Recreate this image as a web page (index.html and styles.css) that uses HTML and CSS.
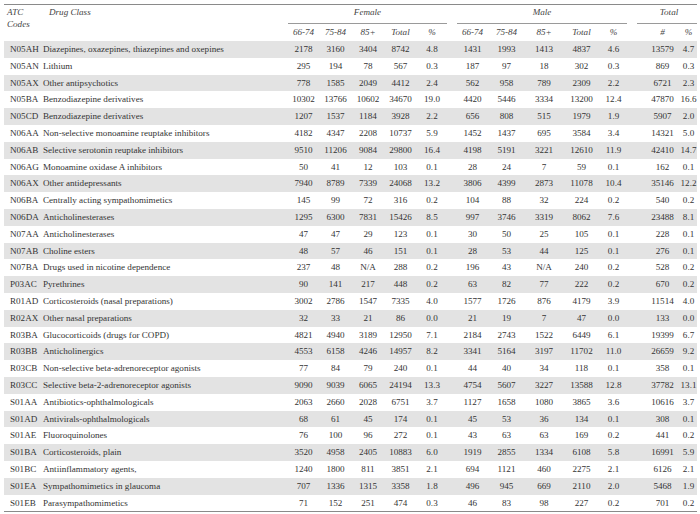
FILE: index.html
```html
<!DOCTYPE html>
<html lang="en">
<head>
<meta charset="utf-8">
<title>ATC drug classes by sex and age</title>
<link rel="stylesheet" href="styles.css">
</head>
<body>
<div class="wrap">
<table class="atc">
<colgroup>
<col class="c-atc"><col class="c-drug">
<col class="c-f66"><col class="c-f75"><col class="c-f85"><col class="c-ft"><col class="c-fp">
<col class="c-sp">
<col class="c-m66"><col class="c-m75"><col class="c-m85"><col class="c-mt"><col class="c-mp">
<col class="c-sp">
<col class="c-tn"><col class="c-tp">
</colgroup>
<thead>
<tr class="h1">
<th rowspan="2" class="hc-atc">ATC<br>Codes</th>
<th rowspan="2" class="hc-drug">Drug Class</th>
<th colspan="5" class="grp"><div class="grp-l">Female</div></th>
<th class="sp"></th>
<th colspan="5" class="grp"><div class="grp-l">Male</div></th>
<th class="sp"></th>
<th colspan="2" class="grp"><div class="grp-l grp-total">Total</div></th>
</tr>
<tr class="h2">
<th>66-74</th><th>75-84</th><th>85+</th><th>Total</th><th>%</th>
<th class="sp"></th>
<th>66-74</th><th>75-84</th><th>85+</th><th>Total</th><th>%</th>
<th class="sp"></th>
<th class="tn">#</th><th>%</th>
</tr>
</thead>
<tbody>
<tr><td class="code">N05AH</td><td class="drug">Diazepines, oxazepines, thiazepines and oxepines</td><td>2178</td><td>3160</td><td>3404</td><td>8742</td><td>4.8</td><td class="sp"></td><td>1431</td><td>1993</td><td>1413</td><td>4837</td><td>4.6</td><td class="sp"></td><td class="tn">13579</td><td>4.7</td></tr>
<tr><td class="code">N05AN</td><td class="drug">Lithium</td><td>295</td><td>194</td><td>78</td><td>567</td><td>0.3</td><td class="sp"></td><td>187</td><td>97</td><td>18</td><td>302</td><td>0.3</td><td class="sp"></td><td class="tn">869</td><td>0.3</td></tr>
<tr><td class="code">N05AX</td><td class="drug">Other antipsychotics</td><td>778</td><td>1585</td><td>2049</td><td>4412</td><td>2.4</td><td class="sp"></td><td>562</td><td>958</td><td>789</td><td>2309</td><td>2.2</td><td class="sp"></td><td class="tn">6721</td><td>2.3</td></tr>
<tr><td class="code">N05BA</td><td class="drug">Benzodiazepine derivatives</td><td>10302</td><td>13766</td><td>10602</td><td>34670</td><td>19.0</td><td class="sp"></td><td>4420</td><td>5446</td><td>3334</td><td>13200</td><td>12.4</td><td class="sp"></td><td class="tn">47870</td><td>16.6</td></tr>
<tr><td class="code">N05CD</td><td class="drug">Benzodiazepine derivatives</td><td>1207</td><td>1537</td><td>1184</td><td>3928</td><td>2.2</td><td class="sp"></td><td>656</td><td>808</td><td>515</td><td>1979</td><td>1.9</td><td class="sp"></td><td class="tn">5907</td><td>2.0</td></tr>
<tr><td class="code">N06AA</td><td class="drug">Non-selective monoamine reuptake inhibitors</td><td>4182</td><td>4347</td><td>2208</td><td>10737</td><td>5.9</td><td class="sp"></td><td>1452</td><td>1437</td><td>695</td><td>3584</td><td>3.4</td><td class="sp"></td><td class="tn">14321</td><td>5.0</td></tr>
<tr><td class="code">N06AB</td><td class="drug">Selective serotonin reuptake inhibitors</td><td>9510</td><td>11206</td><td>9084</td><td>29800</td><td>16.4</td><td class="sp"></td><td>4198</td><td>5191</td><td>3221</td><td>12610</td><td>11.9</td><td class="sp"></td><td class="tn">42410</td><td>14.7</td></tr>
<tr><td class="code">N06AG</td><td class="drug">Monoamine oxidase A inhibitors</td><td>50</td><td>41</td><td>12</td><td>103</td><td>0.1</td><td class="sp"></td><td>28</td><td>24</td><td>7</td><td>59</td><td>0.1</td><td class="sp"></td><td class="tn">162</td><td>0.1</td></tr>
<tr><td class="code">N06AX</td><td class="drug">Other antidepressants</td><td>7940</td><td>8789</td><td>7339</td><td>24068</td><td>13.2</td><td class="sp"></td><td>3806</td><td>4399</td><td>2873</td><td>11078</td><td>10.4</td><td class="sp"></td><td class="tn">35146</td><td>12.2</td></tr>
<tr><td class="code">N06BA</td><td class="drug">Centrally acting sympathomimetics</td><td>145</td><td>99</td><td>72</td><td>316</td><td>0.2</td><td class="sp"></td><td>104</td><td>88</td><td>32</td><td>224</td><td>0.2</td><td class="sp"></td><td class="tn">540</td><td>0.2</td></tr>
<tr><td class="code">N06DA</td><td class="drug">Anticholinesterases</td><td>1295</td><td>6300</td><td>7831</td><td>15426</td><td>8.5</td><td class="sp"></td><td>997</td><td>3746</td><td>3319</td><td>8062</td><td>7.6</td><td class="sp"></td><td class="tn">23488</td><td>8.1</td></tr>
<tr><td class="code">N07AA</td><td class="drug">Anticholinesterases</td><td>47</td><td>47</td><td>29</td><td>123</td><td>0.1</td><td class="sp"></td><td>30</td><td>50</td><td>25</td><td>105</td><td>0.1</td><td class="sp"></td><td class="tn">228</td><td>0.1</td></tr>
<tr><td class="code">N07AB</td><td class="drug">Choline esters</td><td>48</td><td>57</td><td>46</td><td>151</td><td>0.1</td><td class="sp"></td><td>28</td><td>53</td><td>44</td><td>125</td><td>0.1</td><td class="sp"></td><td class="tn">276</td><td>0.1</td></tr>
<tr><td class="code">N07BA</td><td class="drug">Drugs used in nicotine dependence</td><td>237</td><td>48</td><td>N/A</td><td>288</td><td>0.2</td><td class="sp"></td><td>196</td><td>43</td><td>N/A</td><td>240</td><td>0.2</td><td class="sp"></td><td class="tn">528</td><td>0.2</td></tr>
<tr><td class="code">P03AC</td><td class="drug">Pyrethrines</td><td>90</td><td>141</td><td>217</td><td>448</td><td>0.2</td><td class="sp"></td><td>63</td><td>82</td><td>77</td><td>222</td><td>0.2</td><td class="sp"></td><td class="tn">670</td><td>0.2</td></tr>
<tr><td class="code">R01AD</td><td class="drug">Corticosteroids (nasal preparations)</td><td>3002</td><td>2786</td><td>1547</td><td>7335</td><td>4.0</td><td class="sp"></td><td>1577</td><td>1726</td><td>876</td><td>4179</td><td>3.9</td><td class="sp"></td><td class="tn">11514</td><td>4.0</td></tr>
<tr><td class="code">R02AX</td><td class="drug">Other nasal preparations</td><td>32</td><td>33</td><td>21</td><td>86</td><td>0.0</td><td class="sp"></td><td>21</td><td>19</td><td>7</td><td>47</td><td>0.0</td><td class="sp"></td><td class="tn">133</td><td>0.0</td></tr>
<tr><td class="code">R03BA</td><td class="drug">Glucocorticoids (drugs for COPD)</td><td>4821</td><td>4940</td><td>3189</td><td>12950</td><td>7.1</td><td class="sp"></td><td>2184</td><td>2743</td><td>1522</td><td>6449</td><td>6.1</td><td class="sp"></td><td class="tn">19399</td><td>6.7</td></tr>
<tr><td class="code">R03BB</td><td class="drug">Anticholinergics</td><td>4553</td><td>6158</td><td>4246</td><td>14957</td><td>8.2</td><td class="sp"></td><td>3341</td><td>5164</td><td>3197</td><td>11702</td><td>11.0</td><td class="sp"></td><td class="tn">26659</td><td>9.2</td></tr>
<tr><td class="code">R03CB</td><td class="drug">Non-selective beta-adrenoreceptor agonists</td><td>77</td><td>84</td><td>79</td><td>240</td><td>0.1</td><td class="sp"></td><td>44</td><td>40</td><td>34</td><td>118</td><td>0.1</td><td class="sp"></td><td class="tn">358</td><td>0.1</td></tr>
<tr><td class="code">R03CC</td><td class="drug">Selective beta-2-adrenoreceptor agonists</td><td>9090</td><td>9039</td><td>6065</td><td>24194</td><td>13.3</td><td class="sp"></td><td>4754</td><td>5607</td><td>3227</td><td>13588</td><td>12.8</td><td class="sp"></td><td class="tn">37782</td><td>13.1</td></tr>
<tr><td class="code">S01AA</td><td class="drug">Antibiotics-ophthalmologicals</td><td>2063</td><td>2660</td><td>2028</td><td>6751</td><td>3.7</td><td class="sp"></td><td>1127</td><td>1658</td><td>1080</td><td>3865</td><td>3.6</td><td class="sp"></td><td class="tn">10616</td><td>3.7</td></tr>
<tr><td class="code">S01AD</td><td class="drug">Antivirals-ophthalmologicals</td><td>68</td><td>61</td><td>45</td><td>174</td><td>0.1</td><td class="sp"></td><td>45</td><td>53</td><td>36</td><td>134</td><td>0.1</td><td class="sp"></td><td class="tn">308</td><td>0.1</td></tr>
<tr><td class="code">S01AE</td><td class="drug">Fluoroquinolones</td><td>76</td><td>100</td><td>96</td><td>272</td><td>0.1</td><td class="sp"></td><td>43</td><td>63</td><td>63</td><td>169</td><td>0.2</td><td class="sp"></td><td class="tn">441</td><td>0.2</td></tr>
<tr><td class="code">S01BA</td><td class="drug">Corticosteroids, plain</td><td>3520</td><td>4958</td><td>2405</td><td>10883</td><td>6.0</td><td class="sp"></td><td>1919</td><td>2855</td><td>1334</td><td>6108</td><td>5.8</td><td class="sp"></td><td class="tn">16991</td><td>5.9</td></tr>
<tr><td class="code">S01BC</td><td class="drug">Antiinflammatory agents,</td><td>1240</td><td>1800</td><td>811</td><td>3851</td><td>2.1</td><td class="sp"></td><td>694</td><td>1121</td><td>460</td><td>2275</td><td>2.1</td><td class="sp"></td><td class="tn">6126</td><td>2.1</td></tr>
<tr><td class="code">S01EA</td><td class="drug">Sympathomimetics in glaucoma</td><td>707</td><td>1336</td><td>1315</td><td>3358</td><td>1.8</td><td class="sp"></td><td>496</td><td>945</td><td>669</td><td>2110</td><td>2.0</td><td class="sp"></td><td class="tn">5468</td><td>1.9</td></tr>
<tr><td class="code">S01EB</td><td class="drug">Parasympathomimetics</td><td>71</td><td>152</td><td>251</td><td>474</td><td>0.3</td><td class="sp"></td><td>46</td><td>83</td><td>98</td><td>227</td><td>0.2</td><td class="sp"></td><td class="tn">701</td><td>0.2</td></tr>
</tbody>
</table>
</div>
</body>
</html>
```

FILE: styles.css
```css
html, body {
  margin: 0;
  padding: 0;
  background: #ffffff;
}

.wrap {
  width: 693px;
  margin: 4px 0 0 4px;
  border-top: 1px solid #8a8a8a;
  border-bottom: 1px solid #8a8a8a;
}

.atc {
  width: 693px;
  table-layout: fixed;
  border-collapse: collapse;
  border-spacing: 0;
  font-family: "Liberation Serif", "Times New Roman", serif;
  font-size: 9.1px;
  color: #333333;
}

.c-atc { width: 38px; }
.c-drug { width: 246px; }
.c-f66 { width: 31px; }
.c-f75 { width: 33px; }
.c-f85 { width: 32px; }
.c-ft { width: 33px; }
.c-fp { width: 30px; }
.c-sp { width: 10px; }
.c-m66 { width: 31px; }
.c-m75 { width: 37px; }
.c-m85 { width: 38px; }
.c-mt { width: 37px; }
.c-mp { width: 27px; }
.c-tn { width: 43px; }
.c-tp { width: 17px; }

.atc th {
  font-weight: normal;
  font-style: italic;
  color: #444444;
  padding: 0;
  text-align: center;
  white-space: nowrap;
}

.atc th.hc-atc,
.atc th.hc-drug {
  text-align: left;
  vertical-align: top;
  line-height: 12px;
  padding-top: 1px;
}

.atc th.hc-atc { padding-left: 3px; }
.atc th.hc-drug { padding-left: 7px; }

.h1 th { height: 19px; vertical-align: top; }

.grp-l {
  box-sizing: border-box;
  height: 19px;
  padding-top: 1px;
  line-height: 12px;
  border-bottom: 1px solid #9a9a9a;
}

.grp-total { padding-left: 4px; }

.h2 th {
  height: 17px;
  line-height: 17px;
  vertical-align: middle;
}

.atc td {
  height: 16.8px;
  padding: 0;
  line-height: 16.8px;
  text-align: center;
  vertical-align: middle;
  white-space: nowrap;
}

.atc .tn { padding-left: 8px; }

.atc td.code {
  text-align: left;
  padding-left: 6px;
}

.atc td.drug {
  text-align: left;
  padding-left: 1px;
}

.atc tbody tr:nth-child(odd) td {
  background: #e3e3e3;
}
```
